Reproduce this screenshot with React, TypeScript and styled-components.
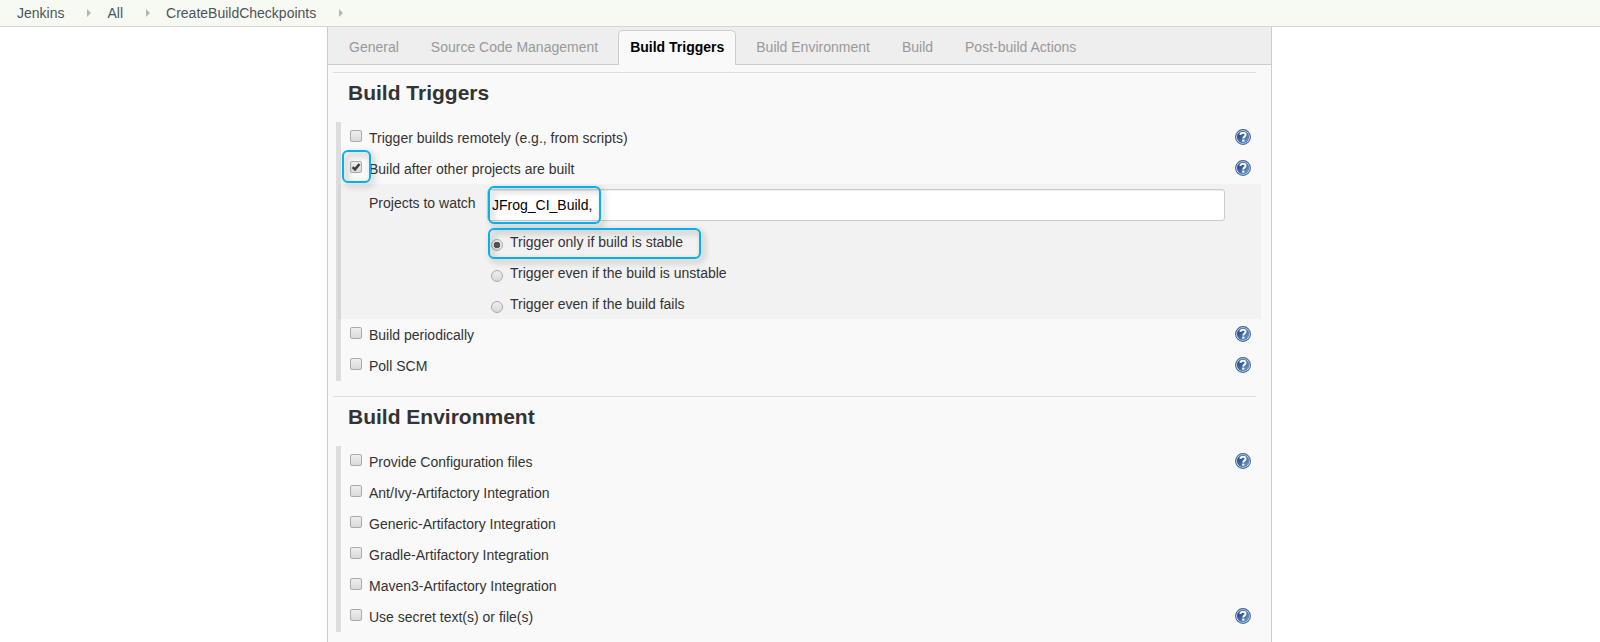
import React from "react";
import styled, { createGlobalStyle, css } from "styled-components";

const GlobalStyle = createGlobalStyle`
  *, *::before, *::after { box-sizing: border-box; }
  body {
    margin: 0;
    background: #fff;
    color: #333;
    font: 14px/31px "Liberation Sans", Arial, sans-serif;
  }
  #root { display: flex; flex-direction: column; min-height: 100vh; }
`;

const Breadcrumbs = styled.nav`
  display: flex;
  align-items: center;
  height: 27px;
  padding-left: 17px;
  background: #f6faf2;
  border-bottom: 1px solid #d3d7cf;
`;

const Crumb = styled.a`
  color: #4d545d;
  line-height: 26px;
  text-decoration: none;
`;

const CrumbArrow = styled.span`
  margin: 0 16px 0 23px;
  border: solid transparent;
  border-width: 4px 0 4px 4px;
  border-left-color: #b8b4b0;
`;

const PageBody = styled.div`
  display: flex;
  flex: 1;
  justify-content: center;
  padding-right: 1px;
`;

const Panel = styled.main`
  flex: 1;
  max-width: 945px;
  padding-bottom: 10px;
  background: #f9f9f9;
  border: solid #ccc;
  border-width: 0 1px;
`;

const TabBar = styled.div`
  display: flex;
  align-items: flex-end;
  gap: 8px;
  height: 38px;
  padding-left: 9px;
  background: #eee;
  border-bottom: 1px solid #ccc;
`;

const Tab = styled.button<{ $active?: boolean }>`
  height: 35px;
  margin-bottom: -1px;
  padding: 0 11px 2px;
  border: 1px solid transparent;
  border-bottom: 0;
  border-radius: 5px 5px 0 0;
  background: none;
  color: #999;
  font: inherit;
  line-height: 32px;
  white-space: nowrap;
  ${(p) =>
    p.$active &&
    css`
      border-color: #ccc;
      background: #f9f9f9;
      color: #000;
      font-weight: bold;
    `}
`;

const Section = styled.section`
  margin: 0 10px 0 5px;
  padding-top: 7px;

  & + & { padding-top: 15px; }
`;

const SectionTitle = styled.h2`
  height: 50px;
  margin: 0 5px 0 0;
  padding-left: 15px;
  border-top: 1px solid #ddd;
  font-size: 21px;
  line-height: 40px;
`;

const Group = styled.div`
  margin-left: 3px;
  border-left: 5px solid #ddd;
`;

const Row = styled.div`
  display: flex;
  align-items: flex-start;
  height: 31px;
  padding: 0 10px 0 9px;
`;

const RowLabel = styled.label`
  flex: 1;
  padding-left: 7px;
  line-height: 33px;
`;

const Mark = styled.span`
  position: relative;
  display: flex;
  margin-top: 8px;
`;

const CheckInput = styled.input`
  appearance: none;
  width: 12px;
  height: 12px;
  margin: 0;
  border: 1px solid #aaa;
  border-radius: 2px;
  background: linear-gradient(#eee, #dadada);
`;

const RadioInput = styled(CheckInput)`
  margin-top: 13px;
  border-radius: 50%;

  &:checked {
    background: radial-gradient(circle, #555 0 3px, transparent 3px), linear-gradient(#eee, #dadada);
  }
`;

const Tick = styled.svg`
  position: absolute;
  inset: 0;
  pointer-events: none;
`;

const HelpButton = styled.button`
  display: flex;
  margin: 7px 0 0;
  padding: 0;
  border: 0;
  background: none;
`;

const SubForm = styled.div`
  display: grid;
  grid-template-columns: 118px 1fr;
  margin-left: -3px;
  padding: 5px 36px 0 31px;
  background: rgba(0, 0, 0, 0.028);
`;

const FieldLabel = styled.label`
  line-height: 28px;
`;

const Field = styled.div`
  position: relative;
  height: 37px;
`;

const TextInput = styled.input`
  display: block;
  width: 100%;
  height: 32px;
  padding: 0 4px 1px;
  border: 1px solid #ccc;
  border-radius: 3px;
  background: #fff;
  box-shadow: inset 0 1px 1px rgba(0, 0, 0, 0.075);
  color: #000;
  font: inherit;
  line-height: 28px;
`;

const RadioList = styled.div`
  grid-column: 2;
`;

const RadioRow = styled.div`
  position: relative;
  display: flex;
  align-items: flex-start;
  gap: 7px;
  height: 31px;
  padding-left: 4px;
  line-height: 33px;
`;

const Highlight = styled.span<{ $left: number; $top: number; $width: number; $height: number }>`
  position: absolute;
  z-index: 1;
  left: ${(p) => p.$left}px;
  top: ${(p) => p.$top}px;
  width: ${(p) => p.$width}px;
  height: ${(p) => p.$height}px;
  border: 2px solid #06b0ec;
  border-radius: 6px;
  filter: drop-shadow(3px 3px 3px rgba(0, 0, 0, 0.35));
  pointer-events: none;
`;

function Help({ topic }: { topic: string }) {
  return (
    <HelpButton type="button" aria-label={`Help for feature: ${topic}`}>
      <svg width="16" height="16" viewBox="0 0 16 16">
        <defs>
          <linearGradient id="helpFill" x1="0" y1="0" x2="1" y2="1">
            <stop offset="0.2" stopColor="#204a87" />
            <stop offset="1" stopColor="#7fa3d0" />
          </linearGradient>
        </defs>
        <circle cx="8" cy="8" r="7.4" fill="#fff" stroke="#3b62a0" strokeWidth="1.1" />
        <circle cx="8" cy="8" r="6" fill="url(#helpFill)" stroke="#3b62a0" strokeWidth="0.5" />
        <path
          d="M5.3 5.9C5.5 4.400 6.600 3.700 8 3.700c1.600 0 2.600.9 2.600 2.100C10.600 7.600 8.300 7.600 8.300 9.600"
          fill="none"
          stroke="#fff"
          strokeWidth="2"
        />
        <rect x="7.200" y="10.600" width="2.200" height="2" fill="#fff" />
      </svg>
    </HelpButton>
  );
}

interface OptionProps {
  id: string;
  text: string;
  help?: boolean;
  checked?: boolean;
  highlighted?: boolean;
}

function Option({ id, text, help, checked, highlighted }: OptionProps) {
  return (
    <Row>
      <Mark>
        <CheckInput type="checkbox" id={id} defaultChecked={checked} />
        {checked && (
          <Tick width="12" height="12" viewBox="0 0 12 12">
            <path d="M2.600 6.200L5 8.400L9.500 3" fill="none" stroke="#3c3c3c" strokeWidth="2.500" />
          </Tick>
        )}
        {highlighted && <Highlight $left={-8} $top={-11} $width={29} $height={33} />}
      </Mark>
      <RowLabel htmlFor={id}>{text}</RowLabel>
      {help && <Help topic={text} />}
    </Row>
  );
}

const tabs = ["General", "Source Code Management", "Build Triggers", "Build Environment", "Build", "Post-build Actions"];
const crumbs = ["Jenkins", "All", "CreateBuildCheckpoints"];
const thresholds = ["Trigger only if build is stable", "Trigger even if the build is unstable", "Trigger even if the build fails"];

export default function App() {
  return (
    <>
      <GlobalStyle />
      <Breadcrumbs aria-label="Breadcrumb">
        {crumbs.map((c) => (
          <React.Fragment key={c}>
            <Crumb href="#">{c}</Crumb>
            <CrumbArrow />
          </React.Fragment>
        ))}
      </Breadcrumbs>
      <PageBody>
        <Panel>
          <TabBar role="tablist">
            {tabs.map((t) => (
              <Tab key={t} type="button" role="tab" aria-selected={t === "Build Triggers"} $active={t === "Build Triggers"}>
                {t}
              </Tab>
            ))}
          </TabBar>

          <Section>
            <SectionTitle>Build Triggers</SectionTitle>
            <Group>
              <Option id="remote" text="Trigger builds remotely (e.g., from scripts)" help />
              <Option id="after" text="Build after other projects are built" help checked highlighted />
              <SubForm>
                <FieldLabel htmlFor="watch">Projects to watch</FieldLabel>
                <Field>
                  <TextInput id="watch" type="text" defaultValue="JFrog_CI_Build," />
                  <Highlight $left={1} $top={-3} $width={113} $height={38} />
                </Field>
                <RadioList>
                  {thresholds.map((t, i) => (
                    <RadioRow key={t}>
                      <RadioInput type="radio" name="threshold" id={`threshold-${i}`} defaultChecked={i === 0} />
                      <label htmlFor={`threshold-${i}`}>{t}</label>
                      {i === 0 && <Highlight $left={1} $top={2} $width={213} $height={31} />}
                    </RadioRow>
                  ))}
                </RadioList>
              </SubForm>
              <Option id="periodic" text="Build periodically" help />
              <Option id="poll" text="Poll SCM" help />
            </Group>
          </Section>

          <Section>
            <SectionTitle>Build Environment</SectionTitle>
            <Group>
              <Option id="config-files" text="Provide Configuration files" help />
              <Option id="ant" text="Ant/Ivy-Artifactory Integration" />
              <Option id="generic" text="Generic-Artifactory Integration" />
              <Option id="gradle" text="Gradle-Artifactory Integration" />
              <Option id="maven" text="Maven3-Artifactory Integration" />
              <Option id="secret" text="Use secret text(s) or file(s)" help />
            </Group>
          </Section>
        </Panel>
      </PageBody>
    </>
  );
}
